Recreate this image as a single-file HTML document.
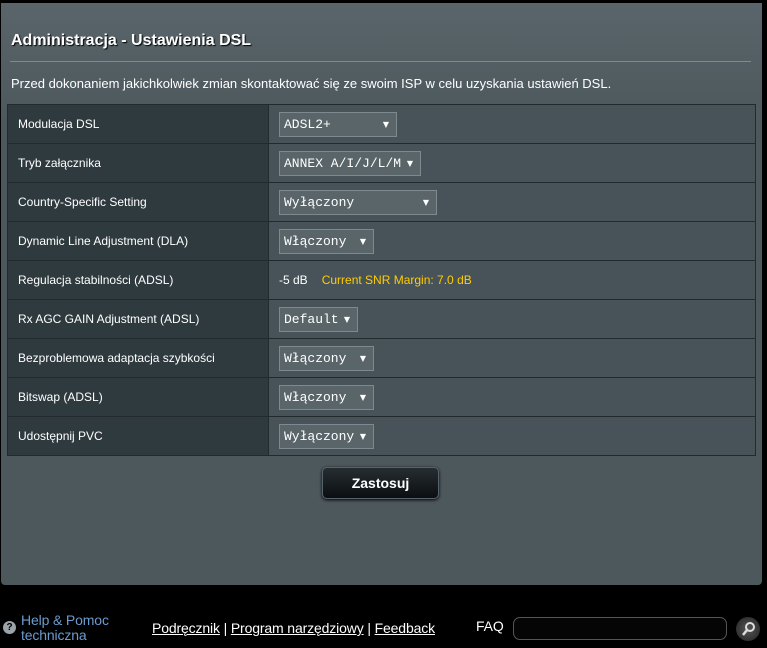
<!DOCTYPE html>
<html><head><meta charset="utf-8"><style>
*{margin:0;padding:0;box-sizing:border-box}
body{width:767px;height:648px;background:#000;font-family:"Liberation Sans",Arial,sans-serif;position:relative;overflow:hidden}
#panel{position:absolute;left:1px;top:3px;width:761px;height:582px;background:linear-gradient(#59656a,#4d585d 120px,#4d585d);border-radius:0 0 4px 4px}
h1{position:absolute;left:11px;top:32px;font-size:16px;color:#fff;font-weight:bold;text-shadow:1px 1px 1px #000}
.hr{position:absolute;left:10px;top:61px;width:741px;height:1px;background:#7f8a8e}
.desc{position:absolute;left:11px;top:76px;font-size:13px;color:#fff}
table{position:absolute;left:7px;top:104px;width:749px;border-collapse:collapse}
td{height:39px;border:1px solid #222a2e;font-size:12px;color:#fff}
td.l{width:261px;background:#2f3a3f;padding-left:10px}
td.r{background:#475358;padding-left:10px}
.sel{display:inline-block;height:25px;line-height:23px;border:1px solid #7d898e;background:#596569;font-family:"Liberation Mono","DejaVu Sans Mono",monospace;font-size:13px;color:#fff;padding-left:4px;position:relative;vertical-align:middle}
.sel:after{content:"▼";position:absolute;right:7px;top:0;font-size:8px;font-family:"DejaVu Sans",sans-serif}
.y{color:#ffcc00;margin-left:14px}
.btn{position:absolute;left:322px;top:467px;width:117px;height:32px;border-radius:5px;background:linear-gradient(#262d31,#0b0f11);border:1px solid #56636a;color:#fff;font-weight:bold;font-size:14px;text-align:center;line-height:30px;box-shadow:0 1px 3px #000}
.ft{position:absolute;font-family:"Liberation Sans Narrow","Liberation Sans",sans-serif;font-size:14px;letter-spacing:-0.14px}
</style></head><body>
<div id="panel"></div>
<h1>Administracja - Ustawienia DSL</h1>
<div class="hr"></div>
<div class="desc">Przed dokonaniem jakichkolwiek zmian skontaktować się ze swoim ISP w celu uzyskania ustawień DSL.</div>
<table>
<tr><td class="l">Modulacja DSL</td><td class="r"><span class="sel" style="width:118px">ADSL2+</span></td></tr>
<tr><td class="l">Tryb załącznika</td><td class="r"><span class="sel" style="width:142px">ANNEX A/I/J/L/M</span></td></tr>
<tr><td class="l">Country-Specific Setting</td><td class="r"><span class="sel" style="width:158px">Wyłączony</span></td></tr>
<tr><td class="l">Dynamic Line Adjustment (DLA)</td><td class="r"><span class="sel" style="width:95px">Włączony</span></td></tr>
<tr><td class="l">Regulacja stabilności (ADSL)</td><td class="r">-5 dB<span class="y">Current SNR Margin: 7.0 dB</span></td></tr>
<tr><td class="l">Rx AGC GAIN Adjustment (ADSL)</td><td class="r"><span class="sel" style="width:79px">Default</span></td></tr>
<tr><td class="l">Bezproblemowa adaptacja szybkości</td><td class="r"><span class="sel" style="width:95px">Włączony</span></td></tr>
<tr><td class="l">Bitswap (ADSL)</td><td class="r"><span class="sel" style="width:95px">Włączony</span></td></tr>
<tr><td class="l">Udostępnij PVC</td><td class="r"><span class="sel" style="width:95px">Wyłączony</span></td></tr>
</table>
<div class="btn">Zastosuj</div>
<div style="position:absolute;left:3px;top:621px;width:13px;height:13px;border-radius:50%;background:#9aa4aa;color:#000;font-size:10px;font-weight:bold;text-align:center;line-height:13px">?</div>
<div class="ft" style="left:21px;top:613px;color:#6b9bd0;line-height:15px">Help &amp; Pomoc<br>techniczna</div>
<div class="ft" style="left:152px;top:620px;color:#fff"><u>Podręcznik</u> | <u>Program narzędziowy</u> | <u>Feedback</u></div>
<div class="ft" style="left:476px;top:618px;color:#fff">FAQ</div>
<div style="position:absolute;left:513px;top:617px;width:214px;height:23px;border:1px solid #555;border-radius:7px;background:#050505"></div>
<div style="position:absolute;left:736px;top:617px;width:24px;height:24px;border-radius:50%;background:radial-gradient(#555,#222)"><svg width="24" height="24"><circle cx="14" cy="10" r="4" fill="none" stroke="#ddd" stroke-width="2"/><path d="M11 13L7 18" stroke="#ddd" stroke-width="2.5"/></svg></div>
</body></html>
